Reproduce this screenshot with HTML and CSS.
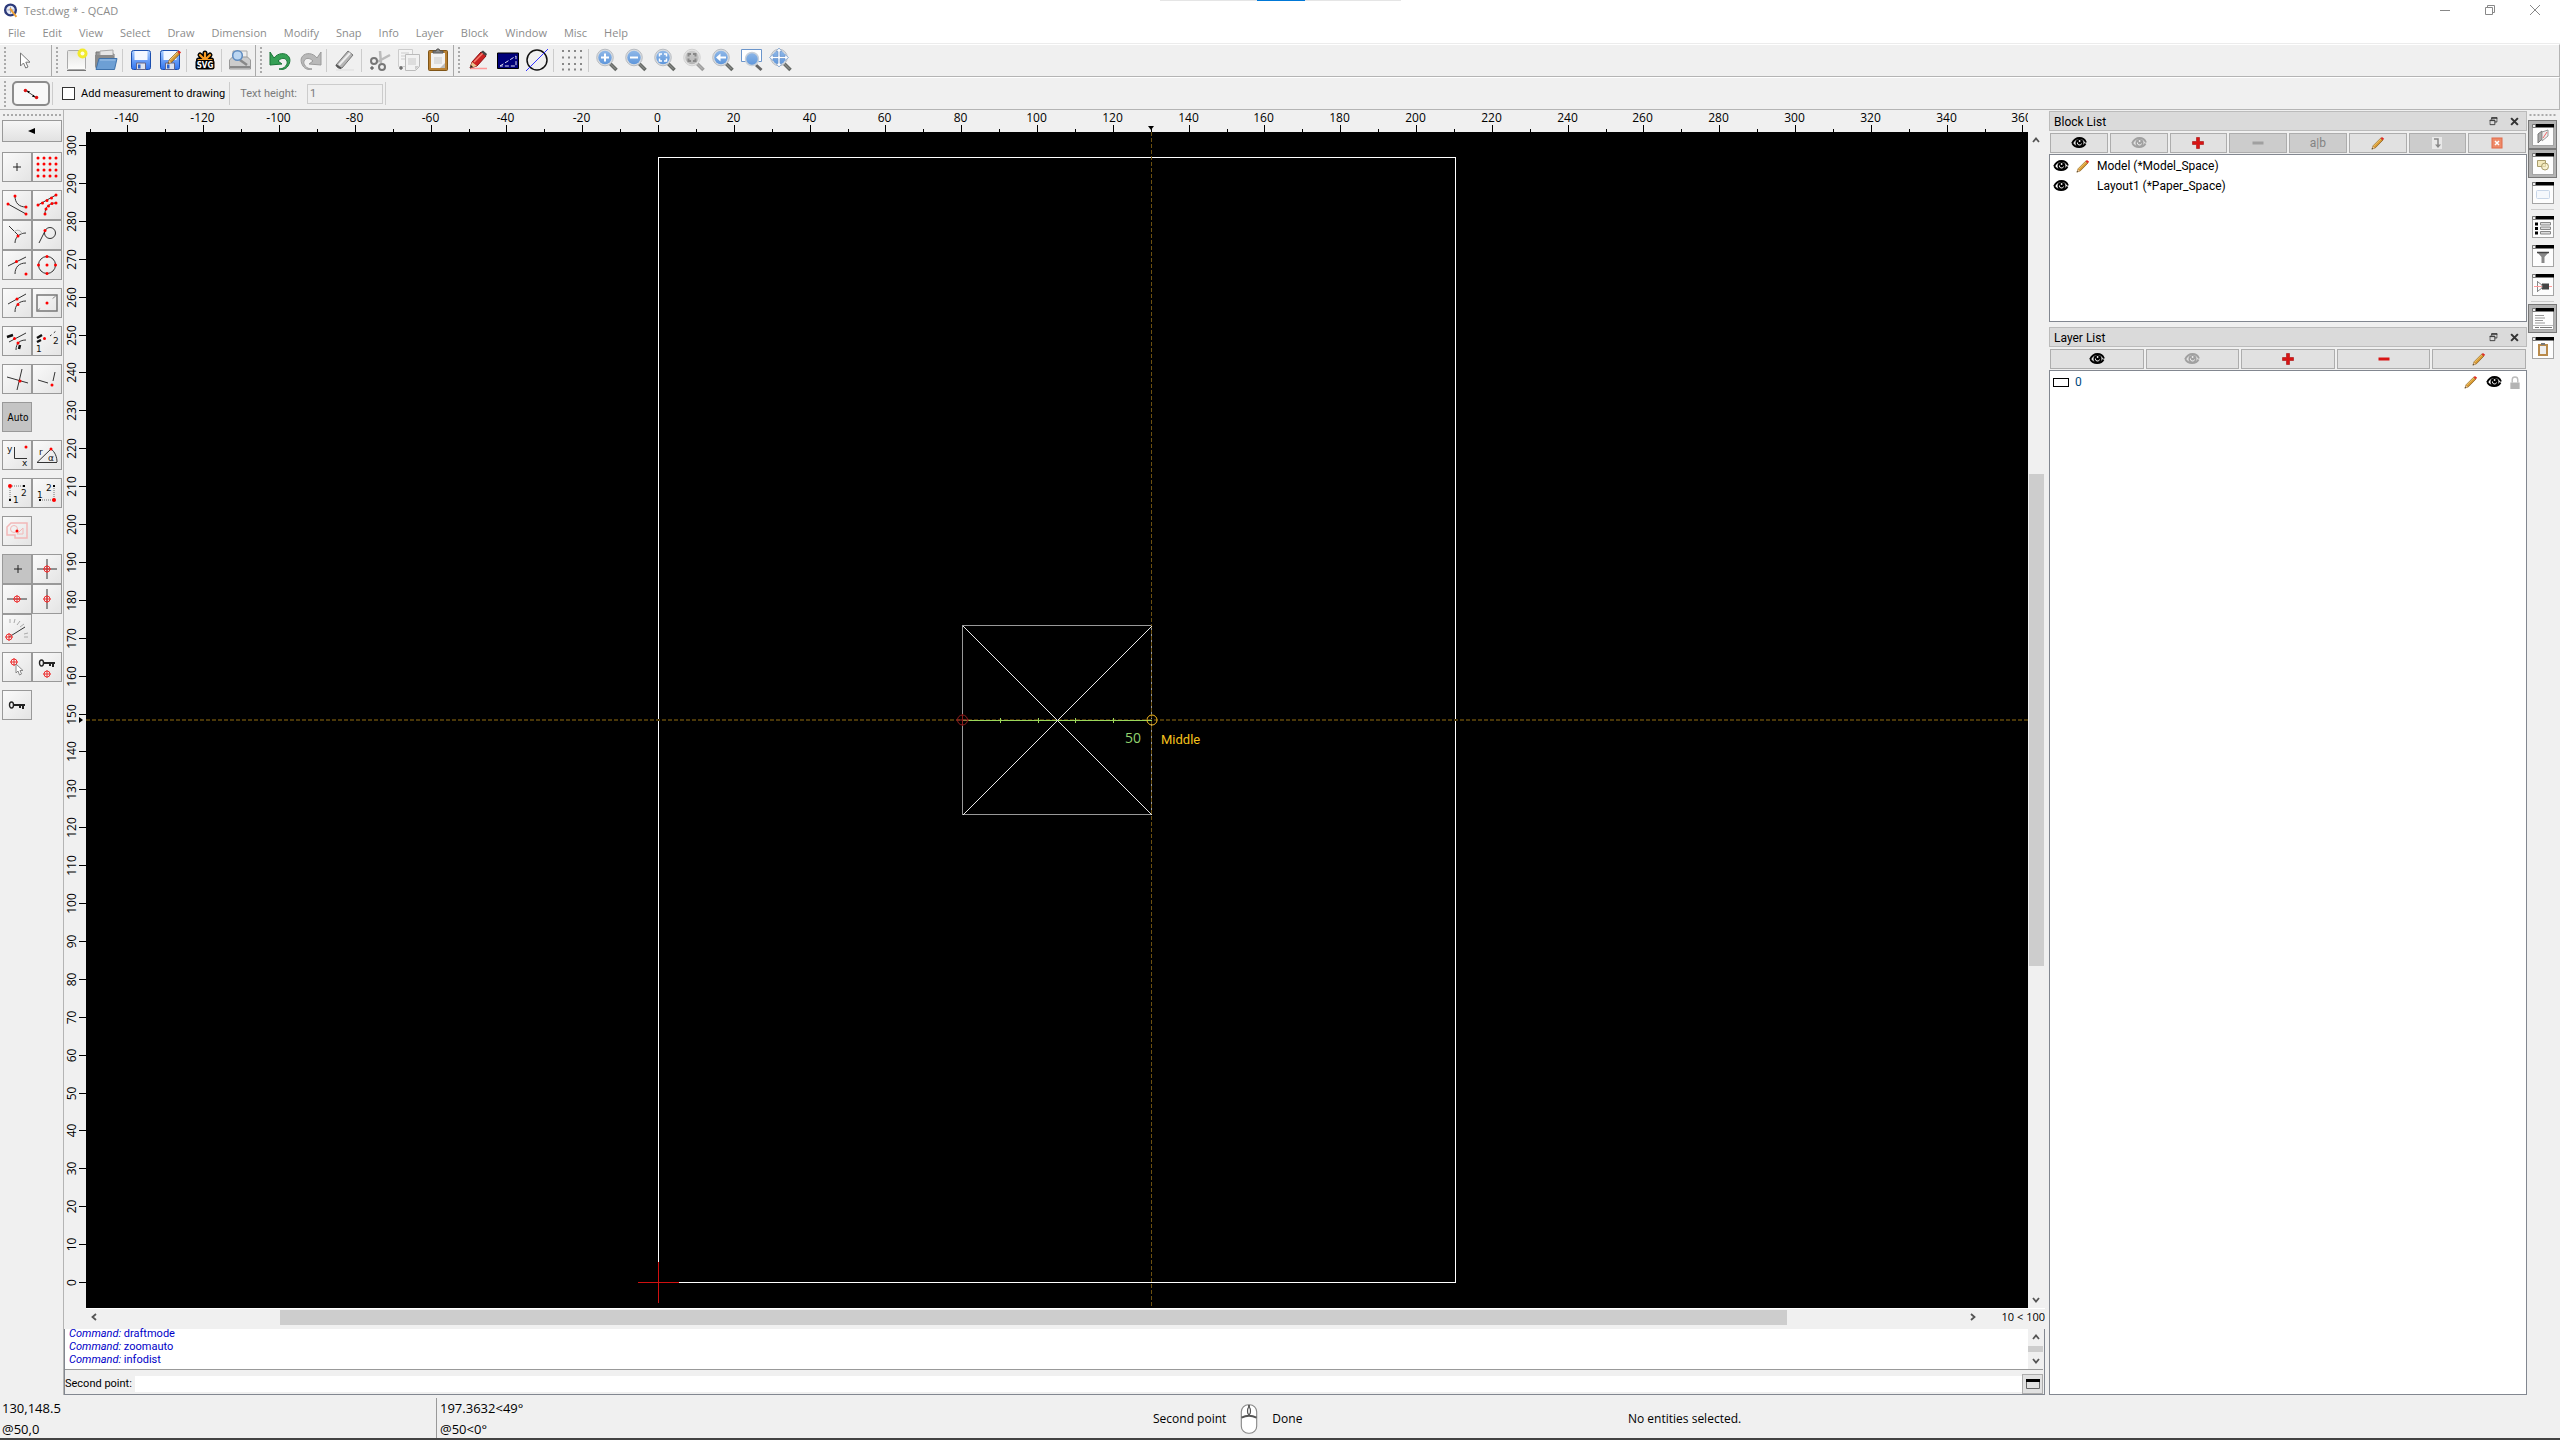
FILE: index.html
```html
<!DOCTYPE html>
<html lang="en">
<head>
<meta charset="utf-8">
<title>Test.dwg * - QCAD</title>
<link rel="stylesheet" href="styles.css">
</head>
<body>
<svg class="defs" aria-hidden="true">
  <defs>
    <linearGradient id="blue" x1="0" y1="0" x2="0" y2="1"><stop offset="0" stop-color="#8fb8e8"/><stop offset="1" stop-color="#5e96db"/></linearGradient>
    <linearGradient id="floppy" x1="0" y1="0" x2="0" y2="1"><stop offset="0" stop-color="#a8ccff"/><stop offset="1" stop-color="#2f74f0"/></linearGradient>
    <linearGradient id="paper" x1="0" y1="0" x2="0" y2="1"><stop offset="0" stop-color="#e4e4e2"/><stop offset="1" stop-color="#fdfdfc"/></linearGradient>
  </defs>
  <symbol id="eye" viewBox="0 0 16 12"><path d="M1 6.500C3 2.500 5 1 8.500 1S14 3 15 5.500M1.500 6.500C4 11 12 11.500 14.500 6.500" fill="none" stroke="currentColor" stroke-width="1.800"/><circle cx="8.500" cy="6" r="4" fill="currentColor"/><path d="M6.500 5.500a2 2 0 0 0 4 1" fill="none" stroke="#eee" stroke-width="1"/><circle cx="8.600" cy="4" r=".9" fill="#eee"/></symbol>
  <symbol id="pencil" viewBox="0 0 16 16"><path d="M1 15l1.500-4L11 2.500l2.500 2.300L5 13.500z" fill="#d99a33" stroke="#7d5414" stroke-width=".8"/><path d="M3 11.500L11.500 3" stroke="#f5d27c"/><path d="M1 15l1.200-3.200L4.400 13.800z" fill="#e9c69b"/><path d="M1 15l.7-1.600.9.900z" fill="#222"/><path d="M11 2.500L12.500 1l2.500 2-1.500 1.800z" fill="#e02a20"/></symbol>
  <symbol id="plus" viewBox="0 0 12 12"><path d="M4.500 .5h3v4h4v3h-4v4h-3v-4h-4v-3h4z" fill="#d81414" stroke="#a80d0d" stroke-width=".6"/></symbol>
  <symbol id="minus" viewBox="0 0 12 12"><path d="M.5 4.500h11v3H.5z" fill="currentColor"/></symbol>
  <symbol id="target" viewBox="0 0 8 8"><circle cx="4" cy="4" r="3" fill="none" stroke="#e33"/><path d="M0 4h8M4 0v8" stroke="#e33"/></symbol>
  <symbol id="lens" viewBox="0 0 24 24"><path d="M14.500 15l7 7" stroke="#666a66" stroke-width="3.500"/><path d="M15.500 16l5 5" stroke="#999" stroke-width="1"/><circle cx="10" cy="9.500" r="8.300" fill="#d7dbe0" stroke="#b9bdc2"/><circle cx="10" cy="9.500" r="6.700" fill="url(#blue)"/></symbol>
  <symbol id="floppy-disk" viewBox="0 0 24 24"><rect x="2.500" y="2.500" width="19" height="19" rx="2" fill="url(#floppy)" stroke="#1c4fae"/><path d="M5.500 3h13v9h-13z" fill="#f3f7ff"/><path d="M7.500 15h9v6.500h-9z" fill="#dde3ee" stroke="#668"/><path d="M9 16.500h2.500v4H9z" fill="#2a63cf"/></symbol>
  <symbol id="win" viewBox="0 0 22 22"><rect x=".5" y=".5" width="21" height="21" fill="#fdfdfd" stroke="#a5a5a5"/><path d="M3 0h19v3.500H3z" fill="#000"/><path d="M.5.500h3v3h-3z" fill="#eee" stroke="#777"/></symbol>
  <symbol id="float" viewBox="0 0 9 10"><path d="M2.500 3V.5h6v5H6M.5 3.500h5.500v5H.5z" fill="none" stroke="#333"/><path d="M2 1.500h7M0 4h6" stroke="#333"/></symbol>
  <symbol id="cross" viewBox="0 0 8 8"><path d="M1 1l6 6M7 1L1 7" stroke="#333" stroke-width="1.800"/></symbol>
  <symbol id="key" viewBox="0 0 18 10"><ellipse cx="3.500" cy="5" rx="2" ry="3" fill="none" stroke="#222" stroke-width="1.400"/><path d="M5.500 5H17M12 5v3M15 5v4" stroke="#222" stroke-width="2"/></symbol>
  <symbol id="chev" viewBox="0 0 8 8"><path d="M1 6l3-3.500L7 6" fill="none" stroke="#555" stroke-width="1.800"/></symbol>
</svg>

<header class="titlebar">
  <svg class="applogo" viewBox="0 0 14 14"><circle cx="7" cy="6.500" r="5" fill="#e8ecf6" stroke="#2c3a7a" stroke-width="2.200"/><path d="M4 6.500h6M7 3.500v6" stroke="#8792b8" stroke-width=".8"/><path d="M6.500 5l6 8" stroke="#eea23a" stroke-width="1.800"/></svg>
  <h1 class="title">Test.dwg * - QCAD</h1>
  <div class="progress"><span class="progress-bar"></span></div>
  <div class="winbuttons">
    <button aria-label="Minimize"><svg viewBox="0 0 12 12"><path d="M1 6.500h10" stroke="#888"/></svg></button>
    <button aria-label="Restore"><svg viewBox="0 0 12 12"><path d="M1.500 3.500h7v7h-7zM3.500 3.500v-2h7v7h-2" fill="none" stroke="#888"/></svg></button>
    <button aria-label="Close"><svg viewBox="0 0 12 12"><path d="M1 1l10 10M11 1L1 11" stroke="#888"/></svg></button>
  </div>
</header>
<nav class="menubar">
  <a href="#">File</a><a href="#">Edit</a><a href="#">View</a><a href="#">Select</a><a href="#">Draw</a><a href="#">Dimension</a><a href="#">Modify</a><a href="#">Snap</a><a href="#">Info</a><a href="#">Layer</a><a href="#">Block</a><a href="#">Window</a><a href="#">Misc</a><a href="#">Help</a>
</nav>

<div class="toolbar">
  <div class="toolgroup reset"><i class="grip"></i>
    <button class="tool" aria-label="Reset"><svg viewBox="0 0 24 24"><path d="M7.500 5v13l3-3 2.200 5 2.300-1-2.200-4.800h4.200z" fill="#fff" stroke="#777"/></svg></button>
  </div>
  <div class="toolgroup"><i class="grip"></i>
    <button class="tool" aria-label="New"><svg viewBox="0 0 24 24"><rect x="2.500" y="2.500" width="18" height="19" rx="1" fill="url(#paper)" stroke="#aaa"/><path d="M2 22.500h19" stroke="#777"/><circle cx="17.500" cy="5.500" r="5" fill="#f2ea2c"/><circle cx="17.500" cy="5.500" r="2" fill="#fffde0"/></svg></button>
    <button class="tool" aria-label="Open"><svg viewBox="0 0 24 24"><path d="M2 20V4h7l1 2h10v14z" fill="#999" stroke="#777"/><path d="M6 3l13-1v6H6z" fill="#e6e6e6" stroke="#aaa"/><path d="M1 19V7h18v5z" fill="#8b8b8b"/><path d="M5 10.500h18l-2.500 11H2z" fill="#6d9fd4" stroke="#3f72ab"/><path d="M6 12h15.500" stroke="#a4c6ea"/></svg></button>
    <i class="sep"></i>
    <button class="tool" aria-label="Save"><svg viewBox="0 0 24 24"><use href="#floppy-disk"/></svg></button>
    <button class="tool" aria-label="Save As"><svg viewBox="0 0 24 24"><use href="#floppy-disk"/><use href="#pencil" x="9" y="1" width="15" height="16"/></svg></button>
    <i class="sep"></i>
    <button class="tool" aria-label="SVG Export"><svg viewBox="0 0 24 24"><path d="M12 12V5M12 12L7 7M12 12l5-5M12 12H5.500M12 12h6.500" stroke="#000" stroke-width="5" stroke-linecap="round"/><path d="M12 12V5M12 12L7 7M12 12l5-5M12 12H5.500M12 12h6.500" stroke="#f59a23" stroke-width="2.200" stroke-linecap="round"/><rect x="2.500" y="12" width="19" height="9.500" rx="2" fill="#000"/><text x="12" y="20" class="svg-label">SVG</text></svg></button>
    <i class="sep"></i>
    <button class="tool" aria-label="Print Preview"><svg viewBox="0 0 24 24"><path d="M5 3h14v9H5z" fill="#eee" stroke="#aaa"/><path d="M1.500 12l3-3h15l3 3v9h-21z" fill="#ccc" stroke="#999"/><path d="M2 19h20" stroke="#888" stroke-width="2"/><path d="M12 12l7 5" stroke="#888" stroke-width="2.500"/><circle cx="9.500" cy="7.500" r="4.800" fill="#bcd6f1" stroke="#5e8bc0" stroke-width="1.500"/></svg></button>
  </div>
  <div class="toolgroup"><i class="grip"></i>
    <button class="tool" aria-label="Undo"><svg viewBox="0 0 24 24"><path d="M5 10C12 1 26 7 19 18c-2 3-5 4-9 3 6 0 9-5 8-8-2-4-6-3-9 0l4 3-12 1V4z" fill="#35a055" stroke="#187536"/></svg></button>
    <button class="tool" aria-label="Redo"><svg viewBox="0 0 24 24"><path d="M19 10C12 1-2 7 5 18c2 3 5 4 9 3-6 0-9-5-8-8 2-4 6-3 9 0l-4 3 12 1V4z" fill="#b9b9b9" stroke="#9a9a9a"/></svg></button>
    <i class="sep"></i>
    <button class="tool" aria-label="Delete"><svg viewBox="0 0 24 24"><path d="M3 17L15 3l5 4L9 20H5z" fill="#b5b5b5" stroke="#777"/><path d="M6 17L17 5" stroke="#eee" stroke-width="2"/><path d="M3 17l5 3.500" stroke="#555" stroke-width="2"/><path d="M3 22h18" stroke="#ddd"/></svg></button>
    <i class="sep"></i>
    <button class="tool" aria-label="Cut"><svg viewBox="0 0 24 24"><path d="M12 3l1 12M22 7L9 14" stroke="#bbb" stroke-width="2.500"/><circle cx="6" cy="13" r="3" fill="none" stroke="#777" stroke-width="2"/><circle cx="14" cy="19" r="3" fill="none" stroke="#777" stroke-width="2"/><path d="M2 20h4M4 18v4" stroke="#444"/></svg></button>
    <button class="tool" aria-label="Copy"><svg viewBox="0 0 24 24"><path d="M1.500 1.500h14v17h-14z" fill="#f4f4f4" stroke="#ccc"/><path d="M4 5h8M4 8h6M4 11h5" stroke="#ccc"/><path d="M8.500 6.500h14v12l-4 4h-10z" fill="#f2f2f2" stroke="#bbb"/><path d="M11 10h8v7h-8z" fill="#ddd"/><path d="M18 22v-4h4z" fill="#ccc"/><path d="M2 20h4M4 18v4" stroke="#444"/></svg></button>
    <button class="tool" aria-label="Paste"><svg viewBox="0 0 24 24"><rect x="2.500" y="2.500" width="19" height="20" rx="1" fill="#b98133" stroke="#7f5517"/><path d="M5 5h14v15H5z" fill="#f2f2f2"/><path d="M8 9h8v7H8z" fill="#ddd"/><path d="M14 20l5-5v5z" fill="#bbb"/><path d="M7 5V3h3l1-2h2l1 2h3v2z" fill="#888" stroke="#555"/></svg></button>
  </div>
  <div class="toolgroup last"><i class="grip"></i>
    <button class="tool" aria-label="Edit"><svg viewBox="0 0 24 24"><path d="M3 20.500h17" stroke="#f99" stroke-width="1.500"/><path d="M3 20l2-6L14 4l5 4-9 10z" fill="#cc2222" stroke="#8e1010"/><path d="M7 14l9-9" stroke="#f57f6d" stroke-width="1.500"/><path d="M3 20l2-6 5 4z" fill="#e8c48d"/><path d="M3 20l1-3 2 2z" fill="#222"/><path d="M14 4l2-1.500L20 6l-1 2z" fill="#444"/></svg></button>
    <button class="tool" aria-label="Draft Mode"><svg viewBox="0 0 24 24"><path d="M1.500 5h21v15.500h-21z" fill="#00007a" stroke="#000"/><path d="M4 18L20 8v10z" fill="none" stroke="#dde" stroke-dasharray="4 2"/></svg></button>
    <button class="tool" aria-label="Antialiasing"><svg viewBox="0 0 24 24"><circle cx="12" cy="12" r="10" fill="none" stroke="#111" stroke-width="1.500"/><path d="M1 23L23 1" stroke="#33f"/></svg></button>
    <i class="sep"></i>
    <button class="tool" aria-label="Grid"><svg viewBox="0 0 24 24"><path d="M2 3h20M2 9.500h20M2 16h20M2 21.500h20" stroke="#888" stroke-width="2" stroke-dasharray="2 4"/></svg></button>
    <i class="sep"></i>
    <button class="tool" aria-label="Zoom In"><svg viewBox="0 0 24 24"><use href="#lens"/><path d="M6 9.500h8M10 5.500v8" stroke="#fff" stroke-width="2"/></svg></button>
    <button class="tool" aria-label="Zoom Out"><svg viewBox="0 0 24 24"><use href="#lens"/><path d="M6 9.500h8" stroke="#fff" stroke-width="2"/></svg></button>
    <button class="tool" aria-label="Auto Zoom"><svg viewBox="0 0 24 24"><use href="#lens"/><path d="M6.500 8.500V6h2.500M11 6h2.500v2.500M13.500 10.500V13H11M9 13H6.500v-2.500" fill="none" stroke="#fff" stroke-width="1.500"/></svg></button>
    <button class="tool gray" aria-label="Zoom to Selection"><svg viewBox="0 0 24 24"><use href="#lens"/><path d="M6.500 8.500V6h2.500M11 6h2.500v2.500M13.500 10.500V13H11M9 13H6.500v-2.500" fill="none" stroke="#444" stroke-width="2"/></svg></button>
    <button class="tool" aria-label="Previous View"><svg viewBox="0 0 24 24"><use href="#lens"/><path d="M5 9.500l4.500-4v3H15v2H9.500v3z" fill="#fff"/></svg></button>
    <button class="tool" aria-label="Window Zoom"><svg viewBox="0 0 24 24"><path d="M1.500 1.500h20v12h-20z" fill="#fff" stroke="#6b95cb"/><path d="M16 17l5.500 5" stroke="#666" stroke-width="3"/><circle cx="12" cy="11" r="6.500" fill="url(#blue)" stroke="#c8d0da" stroke-width="1.500"/></svg></button>
    <button class="tool" aria-label="Panning"><svg viewBox="0 0 24 24"><use href="#lens"/><path d="M10 0l3 3.500h-2v5h5v-2l3.500 3-3.500 3v-2h-5v5h2L10 19l-3-3.500h2v-5H4v2L.5 9.500 4 6.500v2h5v-5H7z" fill="#fff" stroke="#6d97cd" stroke-width=".7"/></svg></button>
  </div>
</div>

<div class="toolbar options">
  <i class="grip"></i>
  <button class="mode" aria-label="Distance"><svg viewBox="0 0 20 14"><path d="M4 3l12 8" stroke="#222"/><circle cx="3.500" cy="3" r="2" fill="#d11"/><circle cx="16.500" cy="11" r="2" fill="#d11"/><path d="M5 3l4 1-2 2zM15 11l-4-1 2-2z"/></svg></button>
  <i class="sep"></i>
  <label class="check"><input type="checkbox">Add measurement to drawing</label>
  <i class="sep"></i>
  <label class="field">Text height:<input type="text" value="1" disabled></label>
  <i class="sep tight"></i>
</div>

<main class="workspace">
  <aside class="snapbar">
    <i class="grip horizontal"></i>
    <button class="back" aria-label="Back"><svg viewBox="0 0 8 6"><path d="M0 3l7-3v6z"/></svg></button>
    <div class="snaps">
      <button aria-label="Free"><svg viewBox="0 0 28 28"><path d="M10 14h8M14 10v8" stroke="#222"/></svg></button>
      <button aria-label="Grid"><svg viewBox="0 0 28 28"><path d="M5 5h0M11 5h0M17 5h0M23 5h0M5 11h0M11 11h0M17 11h0M23 11h0M5 17h0M11 17h0M17 17h0M23 17h0M5 23h0M11 23h0M17 23h0M23 23h0" class="dots"/></svg></button>
    </div>
    <div class="snaps">
      <button aria-label="End"><svg viewBox="0 0 28 28"><path d="M5 13l18 10M12 5c0 7 4 11 11 11" class="ln"/><path d="M5 13h0M23 23h0M12 5h0M23 16h0" class="dots"/></svg></button>
      <button aria-label="On entity"><svg viewBox="0 0 28 28"><path d="M5 14L23 4M12 23c0-7 4-11 11-11" class="ln"/><path d="M5 14h0M9.500 12h0M14 9.500h0M18.500 7h0M23 4h0M12 23h0M13 18h0M15.500 15h0M19 12.500h0M23 12h0" class="dots"/></svg></button>
      <button aria-label="Perpendicular"><svg viewBox="0 0 28 28"><path d="M6 5l9 9M12 22c0-6 5-10 11-10" class="ln"/><path d="M11 11c3-3 7-2 8 2" stroke="#aaa" fill="none"/><path d="M15 15h0" class="dots"/></svg></button>
      <button aria-label="Tangential"><svg viewBox="0 0 28 28"><circle cx="17" cy="12" r="5.500" class="ln"/><path d="M6 22l6-12" class="ln"/><path d="M12 9.500h0" class="dots"/></svg></button>
      <button aria-label="Reference"><svg viewBox="0 0 28 28"><path d="M5 15L23 6M12 23c0-7 4-11 11-11" class="ln"/><path d="M13.500 10.500h0M23 23h0" class="dots"/></svg></button>
      <button aria-label="Center"><svg viewBox="0 0 28 28"><circle cx="14" cy="14" r="8.500" class="ln"/><path d="M14 14h0M14 5.500h0M14 22.500h0M5.500 14h0M22.500 14h0" class="dots"/></svg></button>
    </div>
    <div class="snaps">
      <button aria-label="Middle"><svg viewBox="0 0 28 28"><path d="M5 15L23 5M12 23c0-7 4-11 11-11" class="ln"/><path d="M14 10h0M15 15.500h0" class="dots"/></svg></button>
      <button aria-label="Restrict"><svg viewBox="0 0 28 28"><path d="M4 6h20v16H4z" fill="none" stroke="#777" stroke-width="1.500"/><path d="M4 22L24 6" stroke="#888" stroke-dasharray="4 16 4 20"/><path d="M14 14h0" class="dots"/></svg></button>
    </div>
    <div class="snaps">
      <button aria-label="Intersection manual"><svg viewBox="0 0 28 28"><path d="M6 15L23 6M13 23c0-7 4-10 10-10" class="ln"/><path d="M4 10l6-2M17 18l-1 4" stroke="#111" stroke-width="2.500"/><path d="M11.500 11.500h0M15 16h0" class="dots"/></svg></button>
      <button aria-label="Distance manual"><svg viewBox="0 0 28 28"><path d="M4 11l5-3M4 15l4-2" stroke="#111" stroke-width="2.500"/><path d="M17 9l6-5" class="ln" stroke-dasharray="2 3"/><path d="M11.500 11.500h0" class="dots"/><text x="3" y="25" class="num">1</text><text x="20" y="17" class="num">2</text></svg></button>
    </div>
    <div class="snaps">
      <button aria-label="Intersection"><svg viewBox="0 0 28 28"><path d="M4 12l21 6M19 4l-5 21" class="ln"/><path d="M17 16h0" class="dots"/></svg></button>
      <button aria-label="Extended intersection"><svg viewBox="0 0 28 28"><path d="M5 15l10 3M22 7l-2 9" class="ln"/><path d="M19 20h0" class="dots"/></svg></button>
    </div>
    <div class="snaps"><button class="on auto">Auto</button></div>
    <div class="snaps">
      <button aria-label="Coordinate"><svg viewBox="0 0 28 28"><path d="M11.500 6v11.500H24" fill="none" stroke="#333"/><path d="M23 6h0" class="dots"/><text x="4" y="11" class="num">y</text><text x="19" y="25" class="num">x</text></svg></button>
      <button aria-label="Polar"><svg viewBox="0 0 28 28"><path d="M4 21.500h20M4 21.500L18 8c4 3 6 8 6 13" class="ln"/><path d="M18 8h0" class="dots"/><text x="6" y="14" class="num">r</text><text x="15" y="20" class="num">α</text></svg></button>
    </div>
    <div class="snaps">
      <button aria-label="Reference X"><svg viewBox="0 0 28 28"><path d="M7 7h14M7 7v14" stroke="#777" stroke-dasharray="1 1"/><path d="M6 20h2v2H6zM20 6h2v2h-2z"/><path d="M7 7h0" class="dots big"/><text x="10" y="24" class="num">1</text><text x="18" y="17" class="num">2</text></svg></button>
      <button aria-label="Reference Y"><svg viewBox="0 0 28 28"><path d="M7 21h14M21 7v14" stroke="#777" stroke-dasharray="1 1"/><path d="M6 20h2v2H6zM20 6h2v2h-2z"/><path d="M21 21h0" class="dots big"/><text x="4" y="19" class="num">1</text><text x="13" y="12" class="num">2</text></svg></button>
    </div>
    <div class="snaps">
      <button aria-label="Relative zero"><svg viewBox="0 0 28 28"><path d="M4 10l4-4h16v15H12v-3H4z" fill="none" stroke="#f2b8b8" stroke-width="1.500"/><circle cx="11" cy="12" r="3.500" fill="none" stroke="#f2b8b8"/><path d="M14 17l6-6v6z" fill="none" stroke="#f2b8b8"/><path d="M14 14h0" class="dots"/></svg></button>
    </div>
    <div class="snaps">
      <button class="on" aria-label="No restriction"><svg viewBox="0 0 28 28"><path d="M11 14h8M15 10v8" stroke="#222"/></svg></button>
      <button aria-label="Orthogonal"><svg viewBox="0 0 28 28"><path d="M4 14h20M14 4v20" class="ln"/><use href="#target" x="10" y="10" width="8" height="8"/></svg></button>
      <button aria-label="Horizontal"><svg viewBox="0 0 28 28"><path d="M4 14h20" class="ln"/><use href="#target" x="10" y="10" width="8" height="8"/></svg></button>
      <button aria-label="Vertical"><svg viewBox="0 0 28 28"><path d="M14 4v20" class="ln"/><use href="#target" x="10" y="10" width="8" height="8"/></svg></button>
      <button aria-label="Angle length"><svg viewBox="0 0 28 28"><path d="M6 22l16-10" class="ln"/><path d="M7 4v4M12 4l-1 4M17 6l-3 4M21 9l-4 3M25 18l-4 1M25 22h-4" stroke="#aaa"/><use href="#target" x="2" y="18" width="8" height="8"/></svg></button>
    </div>
    <div class="snaps">
      <button aria-label="Set relative zero"><svg viewBox="0 0 28 28"><use href="#target" x="7" y="5" width="8" height="8"/><path d="M13 11v9l2-2 1.500 4 2-1-1.500-3.500h3z" fill="#fff" stroke="#888"/></svg></button>
      <button aria-label="Lock relative zero"><svg viewBox="0 0 28 28"><use href="#key" x="5" y="5" width="18" height="10"/><use href="#target" x="10" y="17" width="8" height="8"/></svg></button>
    </div>
    <div class="snaps">
      <button aria-label="Lock"><svg viewBox="0 0 28 28"><use href="#key" x="5" y="9" width="18" height="10"/></svg></button>
    </div>
  </aside>

  <section class="center">
    <div class="drawing">
      <span class="corner"></span>
      <svg class="hruler" id="hruler"></svg>
      <span class="corner"></span>
      <svg class="vruler" id="vruler"></svg>
      <svg class="view">
        <g class="crisp">
          <path d="M572.500 25.500H1369.500V1150.500H572.500z" class="sheet"/>
          <path d="M876.500 493.500H1065.500V682.500H876.500z" class="box"/>
          <path d="M0 588h1942" class="guide"/>
          <path d="M1065.500 0v1176" class="guide dim"/>
          <path d="M552 1150.500h41M572.500 1130v41" class="origin"/>
          <path d="M877 588.500h189M914.500 586v5M952.500 586v5M989.500 586v5M1027.500 586v5" class="measure"/>
        </g>
        <path d="M877 494l189 189M1066 494L877 683" class="diag"/>
        <circle cx="876.500" cy="588" r="5" class="from"/><path d="M870 588h13M876.500 582v12" class="from"/>
        <circle cx="1066" cy="588" r="5" class="snap"/>
        <text x="1039" y="611" class="dist">50</text>
        <text x="1075" y="612" class="hint">Middle</text>
      </svg>
      <div class="vscroll"><svg class="chev"><use href="#chev"/></svg><span class="thumb"></span><svg class="chev down"><use href="#chev"/></svg></div>
      <div class="hscroll"><svg class="chev left"><use href="#chev"/></svg><span class="thumb"></span><svg class="chev right"><use href="#chev"/></svg><output class="gridinfo">10 &lt; 100</output></div>
    </div>
    <div class="console">
      <div class="history">
        <div class="log"><p><em>Command:</em> draftmode</p><p><em>Command:</em> zoomauto</p><p><em>Command:</em> infodist</p></div>
        <div class="logscroll"><svg class="chev"><use href="#chev"/></svg><span class="logthumb"></span><svg class="chev down"><use href="#chev"/></svg></div>
      </div>
      <div class="prompt"><label for="cmd">Second point:</label><input id="cmd" type="text"><button aria-label="Show history"><svg viewBox="0 0 14 10"><path d="M.5.500h13v9H.5z" fill="none" stroke="#666"/><path d="M0 0h14v3H0z"/></svg></button></div>
    </div>
  </section>

  <aside class="panels">
    <section class="panel blocks">
      <header><h2>Block List</h2><button aria-label="Float"><svg viewBox="0 0 9 10"><use href="#float"/></svg></button><button aria-label="Close"><svg viewBox="0 0 8 8"><use href="#cross"/></svg></button></header>
      <div class="actions">
        <button aria-label="Show all"><svg class="eye"><use href="#eye"/></svg></button>
        <button aria-label="Hide all"><svg class="eye off"><use href="#eye"/></svg></button>
        <button aria-label="Add block"><svg class="sign"><use href="#plus"/></svg></button>
        <button class="disabled" aria-label="Remove block"><svg class="sign off"><use href="#minus"/></svg></button>
        <button class="disabled">a|b</button>
        <button aria-label="Edit block"><svg class="pen"><use href="#pencil"/></svg></button>
        <button class="disabled" aria-label="Insert block"><svg class="sign" viewBox="0 0 12 12"><path d="M1 0h10v12H1z" fill="#e8e8e8"/><path d="M3 2h4v6" fill="none" stroke="#888" stroke-width="1.500"/><path d="M4 7.500L7 11l3-3.500z" fill="#888"/></svg></button>
        <button aria-label="Close block"><svg class="sign" viewBox="0 0 12 12"><rect x="1" y="1" width="10" height="10" fill="#ee8a68" stroke="#e06a4a"/><path d="M4 4l4 4M8 4L4 8" stroke="#fff" stroke-width="1.500"/></svg></button>
      </div>
      <ul class="list">
        <li><svg class="eye"><use href="#eye"/></svg><svg class="pen"><use href="#pencil"/></svg><span>Model (*Model_Space)</span></li>
        <li><svg class="eye"><use href="#eye"/></svg><svg class="pen"></svg><span>Layout1 (*Paper_Space)</span></li>
      </ul>
    </section>
    <section class="panel layers">
      <header><h2>Layer List</h2><button aria-label="Float"><svg viewBox="0 0 9 10"><use href="#float"/></svg></button><button aria-label="Close"><svg viewBox="0 0 8 8"><use href="#cross"/></svg></button></header>
      <div class="actions">
        <button aria-label="Show all"><svg class="eye"><use href="#eye"/></svg></button>
        <button aria-label="Hide all"><svg class="eye off"><use href="#eye"/></svg></button>
        <button aria-label="Add layer"><svg class="sign"><use href="#plus"/></svg></button>
        <button aria-label="Remove layer"><svg class="sign red"><use href="#minus"/></svg></button>
        <button aria-label="Edit layer"><svg class="pen"><use href="#pencil"/></svg></button>
      </div>
      <ul class="list">
        <li class="layer"><i class="swatch"></i><span class="name">0</span><svg class="pen"><use href="#pencil"/></svg><svg class="eye"><use href="#eye"/></svg><svg class="lock" viewBox="0 0 10 14"><path d="M2 7V4a3 3 0 0 1 6 0v3" fill="none" stroke="#bbb" stroke-width="1.500"/><path d="M0 7h10v7H0z" fill="#b4b4b4"/></svg></li>
      </ul>
    </section>
  </aside>

  <aside class="strip">
    <i class="grip horizontal"></i>
    <button class="on" aria-label="Property Editor"><svg viewBox="0 0 22 22"><use href="#win"/><path d="M6 10l4-3v8l-4 4z" fill="#aaa" stroke="#777"/><path d="M10 8l6-2v6l-6 5z" fill="#eee" stroke="#999"/><path d="M11 14l4-6" stroke="#e66"/></svg></button>
    <button class="on" aria-label="Block List"><svg viewBox="0 0 22 22"><use href="#win"/><path d="M5.500 7.500h8v6h-8z" fill="#f3e9bd" stroke="#a89c6c"/><circle cx="13" cy="13.500" r="3.500" fill="#f3e9bd" fill-opacity=".7" stroke="#a89c6c"/></svg></button>
    <button aria-label="View List"><svg viewBox="0 0 22 22"><use href="#win"/><rect x="4.500" y="8.500" width="13" height="8" rx="1" fill="#f5f8fc" stroke="#c8d6e8"/></svg></button>
    <i class="rule"></i>
    <button aria-label="Layer List"><svg viewBox="0 0 22 22"><use href="#win"/><path d="M3 8h3M3 12.500h3M3 17h3" stroke="#000" stroke-width="3"/><path d="M8.500 6.500h10v2.500h-10zM8.500 11h10v2.500h-10zM8.500 15.500h10V18h-10z" fill="#ddd" stroke="#888"/></svg></button>
    <button aria-label="Selection Filter"><svg viewBox="0 0 22 22"><use href="#win"/><path d="M5 7h12l-4.500 5v6h-3v-6z" fill="#888"/><path d="M5 7.500h12" stroke="#444" stroke-width="1.500"/></svg></button>
    <button aria-label="Library"><svg viewBox="0 0 22 22"><use href="#win"/><path d="M10 9.500h7v6h-7z" fill="#444"/><path d="M5.500 7v11M6 8l4 3v3l-4 3" fill="none" stroke="#888"/><path d="M2 12.500h8M17 12.500h3" stroke="#f99"/></svg></button>
    <i class="rule"></i>
    <button class="on" aria-label="Command Line"><svg viewBox="0 0 22 22"><use href="#win"/><path d="M3 7.500h9M3 10h10M3 12.500h8M3 15h10" stroke="#999"/><path d="M1 17.500h20" stroke="#bbb"/><path d="M3 19.500h4M8 19.500h12" stroke="#777"/></svg></button>
    <button aria-label="Clipboard"><svg viewBox="0 0 22 22"><use href="#win"/><path d="M6 7h10v12H6z" fill="#b98a4a"/><path d="M8 9h6v8H8z" fill="#eee"/><path d="M9 6h4v2H9z" fill="#777"/></svg></button>
  </aside>
</main>

<footer class="statusbar">
  <div class="coords"><span>130,148.5</span><span>@50,0</span></div>
  <div class="coords polar"><span>197.3632&lt;49°</span><span>@50&lt;0°</span></div>
  <div class="mouse"><span>Second point</span><svg viewBox="0 0 18 32"><rect x=".8" y=".8" width="16.400" height="30.400" rx="7.500" fill="#fff" stroke="#888" stroke-width="1.200"/><path d="M1 14.500c5-2.500 11-2.500 16 0M9 1v3M9 11v2" fill="none" stroke="#555" stroke-width="2"/><ellipse cx="9" cy="7.500" rx="1.600" ry="3.800" fill="#eee" stroke="#555" stroke-width="1.200"/></svg><span>Done</span></div>
  <span class="selection">No entities selected.</span>
</footer>
<div class="taskbar"></div>
<script src="rulers.js"></script>
</body>
</html>
```
FILE: rulers.js
```js
// Draws the two rulers from the current drawing scale and origin.
const SCALE = 3.79;
const ORIGIN_X = 572;
const ORIGIN_Y = 1150;
const CURSOR = { x: 1065, y: 588 };

function tick(x1, y1, x2, y2) {
  return `<path d="M${x1} ${y1}L${x2} ${y2}"/>`;
}

let h = '';
for (let v = -150; v <= 370; v += 10) {
  const x = Math.round(ORIGIN_X + v * SCALE) + 0.5;
  const major = v % 20 === 0;
  h += tick(x, major ? 15 : 19, x, 22);
  if (major) h += `<text x="${x - 1}" y="12">${v}</text>`;
}
h += `<polygon points="${CURSOR.x - 3},16 ${CURSOR.x + 3},16 ${CURSOR.x},20"/>`;
document.getElementById('hruler').innerHTML = h;

let s = '';
for (let v = 0; v <= 300; v += 10) {
  const y = Math.round(ORIGIN_Y - v * SCALE) + 0.5;
  s += tick(15, y, 22, y);
  s += `<text transform="translate(12 ${y}) rotate(-90)">${v}</text>`;
}
s += `<polygon points="15,${CURSOR.y - 3} 15,${CURSOR.y + 3} 19,${CURSOR.y}"/>`;
document.getElementById('vruler').innerHTML = s;
```
FILE: styles.css
```css
* { box-sizing: border-box; }
body { margin: 0; height: 100vh; display: flex; flex-direction: column; overflow: hidden; background: #f0f0f0; color: #000; font: 11px/14px Roboto, sans-serif; }
button { padding: 0; border: 0; background: none; font: inherit; color: inherit; display: flex; align-items: center; justify-content: center; }
h1, h2, p, ul { margin: 0; padding: 0; font-size: inherit; font-weight: normal; list-style: none; }
svg { display: block; flex: none; }
.defs { position: absolute; width: 0; height: 0; }

.titlebar, .menubar { flex: none; background: #fff; color: #8c8c8c; font: 11px/16px "Open Sans", sans-serif; display: flex; }
.titlebar { height: 22px; padding: 3px 19px 0 3px; position: relative; }
.applogo { width: 15px; height: 15px; }
.title { margin-left: 6px; flex: 1; }
.progress { position: absolute; top: 0; left: 1160px; width: 241px; height: 1px; background: #e5e5e5; display: flex; justify-content: center; }
.progress-bar { width: 48px; background: #0078d7; }
.winbuttons { display: flex; gap: 33px; align-items: flex-start; padding-top: 1px; }
.winbuttons svg { width: 12px; height: 12px; }
.menubar { height: 22px; padding: 3px 8px 0; gap: 17px; border-bottom: 1px solid #ececec; }
.menubar a { color: inherit; text-decoration: none; }

.toolbar { flex: none; height: 33px; display: flex; border-top: 1px solid #fff; border-bottom: 1px solid #b4b4b4; border-right: 1px solid #b4b4b4; }
.toolgroup { display: flex; align-items: center; padding: 0 1px 1px 0; border-right: 1px solid #aaa; }
.toolgroup.last { border: 0; }
.toolgroup.reset { padding-right: 12px; }
.grip { flex: none; width: 10px; height: 26px; align-self: center; background: radial-gradient(circle, #aaa 1px, transparent 1px) center / 4px 4px repeat-y; }
.grip.horizontal { width: auto; height: 10px; align-self: stretch; background-repeat: repeat-x; }
.tool { width: 29px; height: 29px; }
.tool svg { width: 24px; height: 24px; }
.gray { filter: grayscale(1); opacity: .6; }
.sep { flex: none; width: 1px; height: 23px; margin: 0 3px 0 2px; background: #ccc; align-self: center; }
.svg-label { font: bold 8px "DejaVu Sans Condensed", sans-serif; text-anchor: middle; fill: #fff; }
.options { align-items: center; }
.mode { width: 38px; height: 25px; margin: 0 2px; border: 2px solid #8c8c8c; border-radius: 5px; background: #f8f8f8; }
.mode svg { width: 18px; height: 12px; }
.options .sep { margin: 0; }
.options .sep.tight { margin-left: 2px; }
.check { display: flex; align-items: center; gap: 6px; padding: 0 4px 0 9px; }
.check input { appearance: none; width: 13px; height: 13px; margin: 0; border: 1px solid #333; background: #fff; }
.field { display: flex; align-items: center; gap: 10px; padding-left: 10px; color: #7a7a7a; }
.field input { width: 76px; height: 20px; border: 1px solid #ccc; padding: 0 2px; background: #f0f0f0; font: inherit; color: #7a7a7a; }

.workspace { flex: 1; min-height: 0; display: flex; }
.snapbar { flex: none; width: 64px; padding: 0 1px 0 2px; border-right: 1px solid #b4b4b4; display: flex; flex-direction: column; }
.back { height: 22px; margin-bottom: 10px; border: 1px solid #999; background: linear-gradient(#f6f6f6, #e2e2e2); }
.back svg { width: 8px; height: 6px; }
.snaps { display: grid; grid-template-columns: 30px 30px; margin-bottom: 8px; }
.snaps button { height: 30px; border: 1px solid #999; background: linear-gradient(135deg, #fafafa, #e4e4e4); }
.snaps .on { background: #c4c4c4; }
.snaps .auto { padding: 2px 0 0 2px; font-family: "DejaVu Sans Condensed", sans-serif; font-size: 10px; }
.snaps svg { width: 28px; height: 28px; }
.dots { stroke: #f00; stroke-width: 3; stroke-linecap: round; }
.dots.big { stroke-width: 4; }
.ln { fill: none; stroke: #333; stroke-width: 1; }
.num { font: 9px "DejaVu Sans", sans-serif; fill: #111; }

.center { flex: 1; min-width: 0; display: flex; flex-direction: column; }
.drawing { flex: 1; min-height: 0; display: grid; grid-template: 22px 1fr 17px / 22px 1fr 17px; padding-bottom: 4px; }
.drawing > svg { width: 100%; height: 100%; overflow: hidden; }
.hruler, .vruler { font: 12px "Open Sans", sans-serif; text-anchor: middle; }
.hruler path, .vruler path { stroke: #000; }
.view { background: #000; }
.crisp { shape-rendering: crispEdges; fill: none; }
.sheet { stroke: #fff; }
.box { stroke: #999; }
.guide { stroke: #4a3708; stroke-width: 2; stroke-dasharray: 4 2; }
.guide.dim { stroke: #6b5010; stroke-width: 1; }
.origin { stroke: #d01010; }
.measure { stroke: #9bd65a; }
.diag { stroke: #e8e8e8; }
.from { fill: none; stroke: #8f1e1e; }
.snap { fill: none; stroke: #f5b81e; }
.dist, .hint { font: 14px "Open Sans", sans-serif; fill: #92d36e; }
.hint { font: 13px Roboto, sans-serif; fill: #f5c21c; }
.vscroll { display: grid; grid-template: 16px 326fr 492fr 326fr 16px / 16px; justify-items: center; align-items: center; }
.vscroll .thumb { grid-row: 3; width: 15px; height: 100%; background: #cdcdcd; }
.vscroll .down { grid-row: 5; }
.hscroll { grid-column: 2 / -1; border-top: 1px solid #fff; display: grid; grid-template: 16px / 16px 178fr 1507fr 178fr 16px 64px; align-items: center; justify-items: center; }
.hscroll .thumb { grid-column: 3; width: 100%; height: 15px; background: #cdcdcd; }
.hscroll .right { grid-column: 5; }
.gridinfo { grid-column: 6; justify-self: end; font: 11px/14px "Open Sans", sans-serif; }
.chev { width: 8px; height: 8px; }
.down { transform: rotate(180deg); }
.left { transform: rotate(-90deg); }
.right { transform: rotate(90deg); }
.console { flex: none; height: 66px; border: 1px solid #828790; border-top: 0; display: flex; flex-direction: column; padding-right: 1px; }
.history { height: 41px; background: #fff; border-bottom: 1px solid #999; display: flex; }
.log { flex: 1; padding: 0 4px; line-height: 13px; color: #0000c8; margin-top: -2px; }
.logscroll { width: 15px; background: #f0f0f0; display: grid; grid-template: 16px 1fr 16px / 15px; align-items: center; justify-items: center; }
.logthumb { width: 15px; height: 6px; background: #cdcdcd; }
.prompt { flex: 1; display: flex; align-items: center; padding-top: 3px; }
.prompt input { flex: 1; height: 16px; margin-left: 3px; border: 0; padding: 0 2px; font: inherit; }
.prompt button { width: 21px; height: 20px; border: 1px solid #adadad; background: #e1e1e1; }
.prompt svg { width: 14px; height: 10px; }

.panels { flex: none; width: 482px; padding: 1px 0 0 4px; display: flex; flex-direction: column; gap: 5px; font: 12px/16px Roboto, sans-serif; }
.panel { display: flex; flex-direction: column; }
.blocks { height: 211px; }
.layers { flex: 1; min-height: 0; }
.panel header { flex: none; height: 20px; padding: 1px 7px 0 4px; border: 1px solid #bbb; background: #dadada; display: flex; align-items: center; gap: 12px; }
.panel h2 { flex: 1; }
.panel header svg { width: 9px; height: 9px; }
.actions { flex: none; display: flex; gap: 2px; padding: 2px 1px 1px; }
.actions button { flex: 1; height: 20px; border: 1px solid #adadad; background: #e1e1e1; }
.actions .disabled { background: #ccc; color: #838383; }
.eye { width: 16px; height: 12px; color: #000; }
.off { color: #a0a0a0; }
.pen { width: 14px; height: 14px; }
.sign { width: 12px; height: 12px; }
.red { color: #d81414; }
.list { flex: 1; border: 1px solid #828790; background: #fff; padding: 1px 6px 1px 3px; }
.list li { display: flex; align-items: center; gap: 7px; height: 20px; }
.swatch { width: 16px; height: 9px; border: 1px solid #000; }
.list .layer { gap: 8px; }
.layer .swatch { margin-right: -2px; }
.name { flex: 1; color: #004a80; }
.lock { width: 10px; height: 13px; }

.strip { flex: none; width: 33px; padding: 0 3px 0 1px; display: flex; flex-direction: column; }
.strip button { height: 29px; border: 1px solid transparent; }
.strip .on { border-color: #777; background: #b4b4b4; }
.strip svg { width: 22px; height: 22px; }
.rule { height: 1px; margin: 2px 3px 2px; background: #ccc; }

.statusbar { flex: none; height: 43px; display: grid; grid-template-columns: 436px 600px 500px 1fr; font: 12px/16px "Open Sans", sans-serif; align-items: center; }
.coords { display: flex; flex-direction: column; gap: 5px; height: 40px; padding: 2px 0 0 2px; align-self: end; font-size: 13px; }
.polar { border-left: 1px solid #999; padding-left: 3px; }
.mouse { display: flex; align-items: center; gap: 14px; padding-left: 117px; padding-top: 5px; }
.mouse svg { width: 18px; height: 30px; }
.selection { padding: 5px 0 0 92px; }
.taskbar { flex: none; height: 2px; background: #444; }
```
